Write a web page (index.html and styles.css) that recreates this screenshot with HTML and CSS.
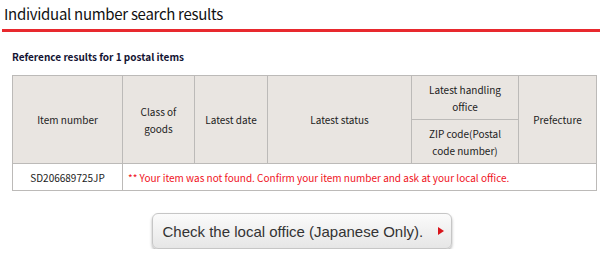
FILE: index.html
```html
<!DOCTYPE html>
<html lang="en">
<head>
    <meta charset="UTF-8">
    <meta name="viewport" content="width=device-width, initial-scale=1.0">
    <title>Individual number search results</title>
    <link rel="stylesheet" href="styles.css">
</head>
<body>
    <!-- Page heading -->
    <h1 class="page-title">Individual number search results</h1>

    <div class="results">
        <h2 class="results-caption">Reference results for 1 postal items</h2>

        <table class="results-table">
            <colgroup>
                <col class="col-item">
                <col class="col-class">
                <col class="col-date">
                <col class="col-status">
                <col class="col-office">
                <col class="col-pref">
            </colgroup>
            <tr>
                <th rowspan="2">Item number</th>
                <th rowspan="2">Class of<br>goods</th>
                <th rowspan="2">Latest date</th>
                <th rowspan="2">Latest status</th>
                <th>Latest handling<br>office</th>
                <th rowspan="2">Prefecture</th>
            </tr>
            <tr>
                <th>ZIP code(Postal<br>code number)</th>
            </tr>
            <tr>
                <td>SD206689725JP</td>
                <td colspan="5" class="not-found">** Your item was not found. Confirm your item number and ask at your local office.</td>
            </tr>
        </table>
    </div>

    <!-- Link to local office search -->
    <div class="action">
        <a href="#" class="office-btn">Check the local office (Japanese Only).<span class="arrow"></span></a>
    </div>
</body>
</html>
```

FILE: styles.css
```css
/* Reset styles */
* {
    margin: 0;
    padding: 0;
    box-sizing: border-box;
}

body {
    font-family: "Noto Sans CJK JP", "DejaVu Sans", sans-serif;
    background: #fff;
    color: #222;
    width: 600px;
}

/* Heading with red rule */
.page-title {
    font-size: 15px;
    letter-spacing: -0.3px;
    font-weight: normal;
    color: #111;
    line-height: 20px;
    height: 32px;
    padding: 4px 0 0 2px;
    margin-left: 2px;
    border-bottom: 3px solid #e8292e;
}

/* Results block */
.results {
    padding: 18px 5px 0 12px;
}

.results-caption {
    font-size: 10px;
    font-weight: bold;
    color: #141433;
    line-height: 14px;
    margin-bottom: 11px;
}

.results-table {
    width: 584px;
    border-collapse: collapse;
    table-layout: fixed;
    font-size: 10px;
    color: #222;
}

.col-item { width: 110px; }
.col-class { width: 72px; }
.col-date { width: 73px; }
.col-status { width: 144px; }
.col-office { width: 107px; }
.col-pref { width: 78px; }

.results-table th,
.results-table td {
    border: 1px solid #bcbab8;
    text-align: center;
    font-weight: normal;
    line-height: 17px;
}

.results-table th {
    background: #e9e5e1;
    height: 44px;
}

.results-table td {
    height: 27px;
    background: #fff;
}

.results-table td.not-found {
    color: #f0121c;
    text-align: left;
    padding-left: 5px;
}

/* Button */
.action {
    display: flex;
    justify-content: center;
    padding: 22px 0 0 3px;
}

.office-btn {
    display: flex;
    align-items: center;
    width: 300px;
    height: 36px;
    padding-left: 10px;
    font-family: "Liberation Sans", Arial, sans-serif;
    font-size: 15px;
    color: #333;
    text-decoration: none;
    border: 1px solid #c6c6c6;
    border-radius: 6px;
    background: linear-gradient(#fbfbfb, #e6e6e6);
    box-shadow: 0 2px 3px rgba(0, 0, 0, 0.3);
}

.arrow {
    width: 0;
    height: 0;
    margin-left: 15px;
    border-left: 6px solid #d8141b;
    border-top: 4px solid transparent;
    border-bottom: 4px solid transparent;
}
```
